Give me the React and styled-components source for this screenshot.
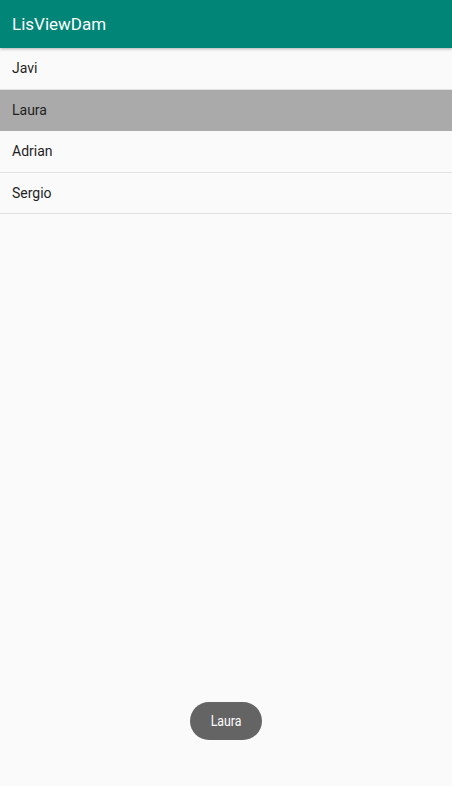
import React from "react";
import styled, { createGlobalStyle } from "styled-components";

const Global = createGlobalStyle`
  html, body { margin: 0; padding: 0; background: #fafafa; }
  body { font-family: Roboto, "Noto Sans", sans-serif; }
`;

const Screen = styled.div`
  width: 452px;
  height: 786px;
  background: #fafafa;
  position: relative;
  overflow: hidden;
`;

const Toolbar = styled.header`
  height: 48px;
  background: #008577;
  display: flex;
  align-items: center;
  padding: 0 12px;
  box-shadow: 0 1px 3px rgba(0,0,0,0.3);
  position: relative;
  z-index: 1;
`;

const Title = styled.h1`
  margin: 0;
  font-size: 17px;
  font-weight: 400;
  color: #ffffff;
`;

const List = styled.ul`
  list-style: none;
  margin: 0;
  padding: 0;
`;

const Row = styled.li`
  height: 40.5px;
  display: flex;
  align-items: center;
  padding: 0 12px;
  font-size: 14px;
  color: #1f1f1f;
  border-bottom: 1px solid ${(p) => (p.$selected ? "#aaaaaa" : "#e3e3e3")};
  background: ${(p) => (p.$selected ? "#aaaaaa" : "transparent")};
`;

const Toast = styled.div`
  position: absolute;
  left: 50%;
  bottom: 46px;
  transform: translateX(-50%);
  width: 72px;
  height: 38px;
  border-radius: 19px;
  background: #646464;
  color: #ffffff;
  display: flex;
  align-items: center;
  justify-content: center;
`;

const ToastText = styled.span`
  display: inline-block;
  font-size: 14.5px;
  transform: scaleX(0.85);
`;

const names = ["Javi", "Laura", "Adrian", "Sergio"];

export default function App() {
  return (
    <Screen>
      <Global />
      <Toolbar>
        <Title>LisViewDam</Title>
      </Toolbar>
      <List>
        {names.map((n) => (
          <Row key={n} $selected={n === "Laura"}>
            {n}
          </Row>
        ))}
      </List>
      <Toast>
        <ToastText>Laura</ToastText>
      </Toast>
    </Screen>
  );
}
